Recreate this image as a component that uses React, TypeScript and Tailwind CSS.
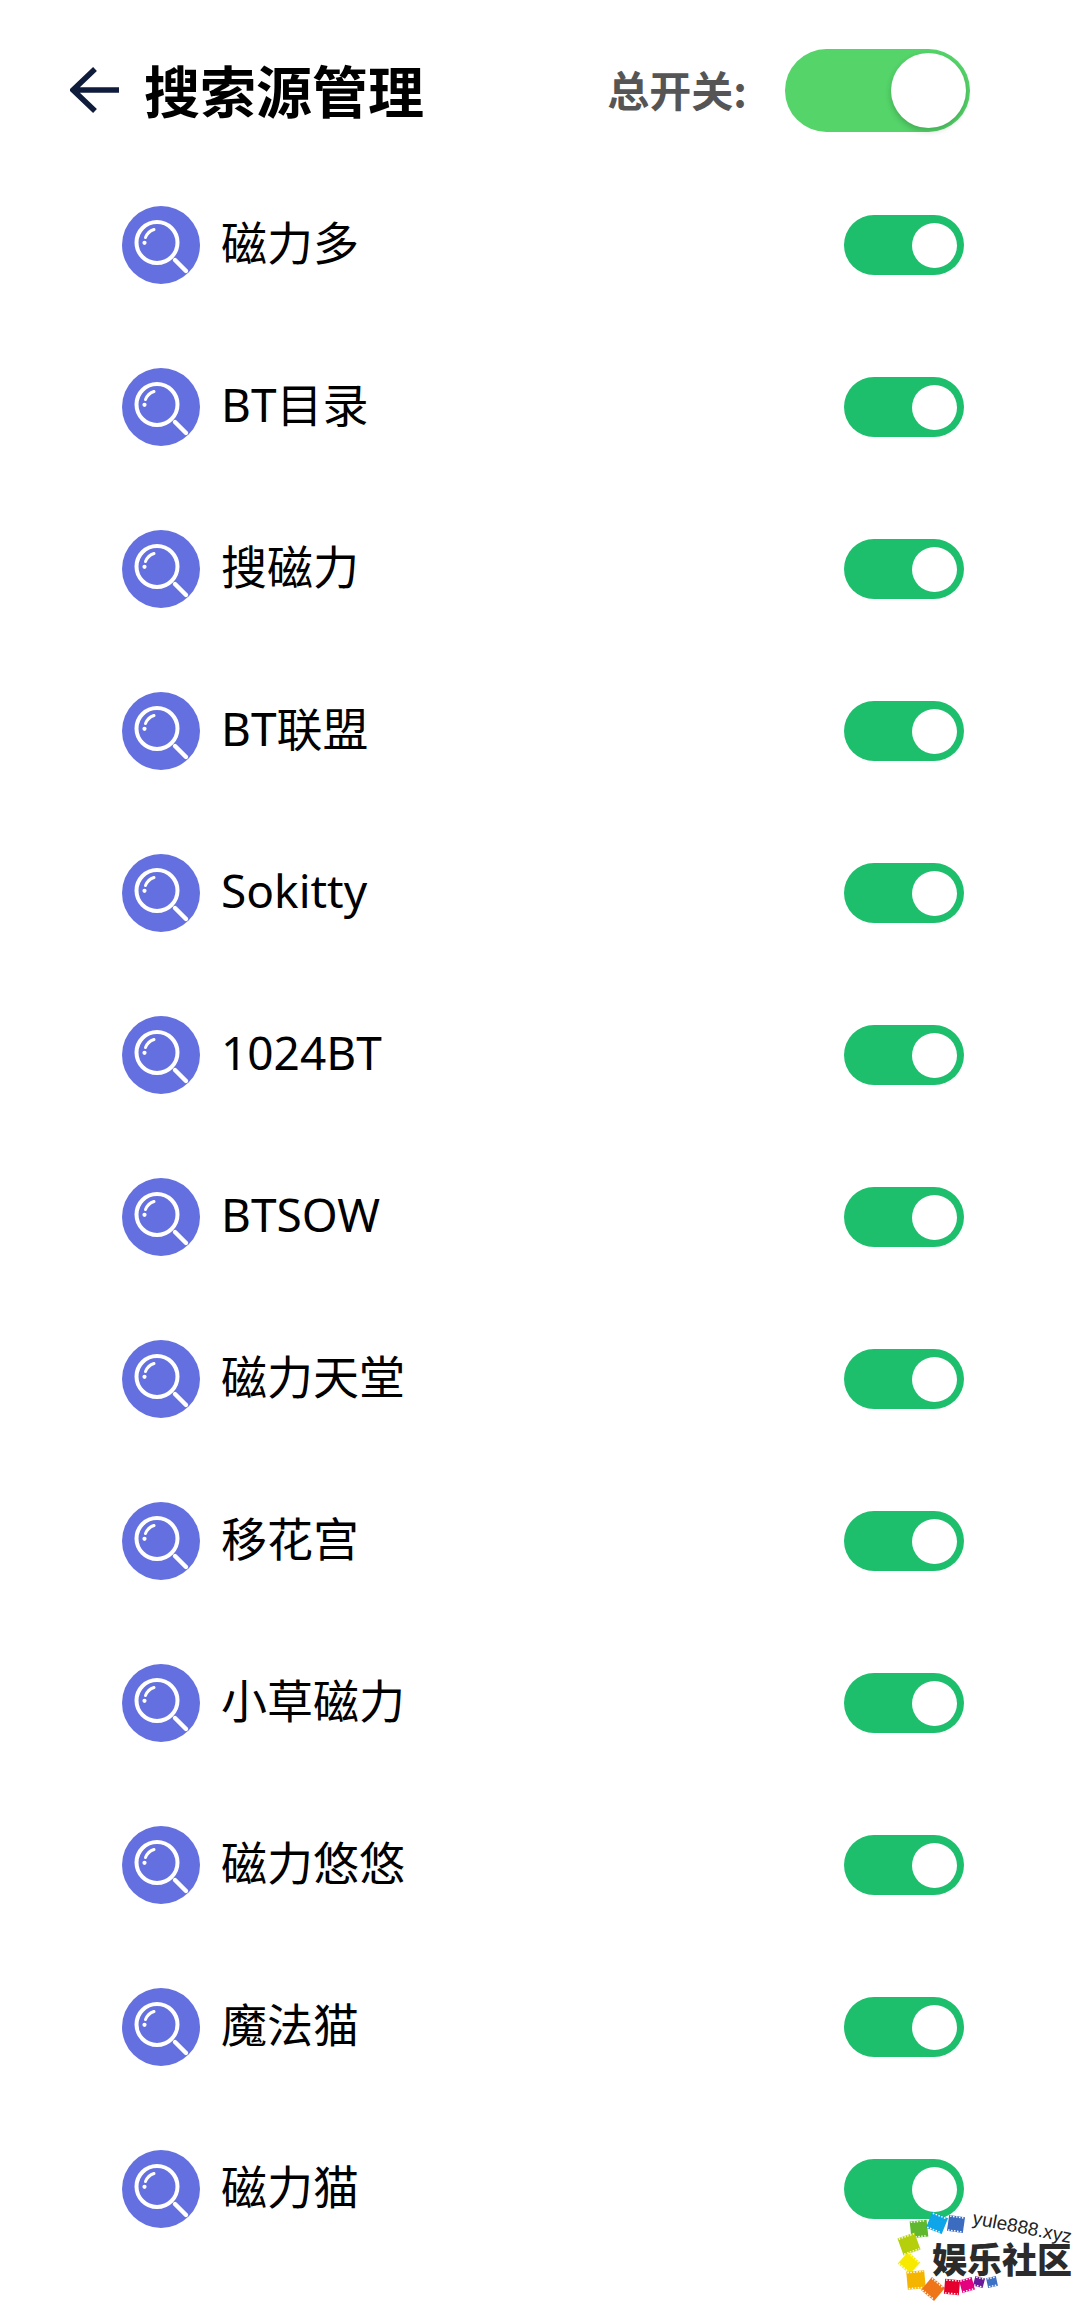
const rows = ["磁力多","BT目录","搜磁力","BT联盟","Sokitty","1024BT","BTSOW","磁力天堂","移花宫","小草磁力","磁力悠悠","魔法猫","磁力猫"];

function SearchIcon() {
  return (
    <svg viewBox="0 0 78 78" className="w-[78px] h-[78px] shrink-0">
      <circle cx="39" cy="39" r="39" fill="#6570e0" />
      <circle cx="35" cy="36.5" r="20.5" fill="none" stroke="#fff" strokeWidth="4" />
      <path d="M53 54L64 65" stroke="#fff" strokeWidth="4.4" strokeLinecap="round" />
      <path d="M23.5 31.5A13.5 13.5 0 0 1 32 23.5" fill="none" stroke="#fff" strokeWidth="3" strokeLinecap="round" />
      <circle cx="22.5" cy="36.8" r="2.1" fill="#fff" />
    </svg>
  );
}

function Toggle() {
  return (
    <div className="w-[120px] h-[60px] rounded-full bg-[#1dbf6d] flex items-center justify-end pr-[7px]">
      <div className="w-[45px] h-[45px] rounded-full bg-white" />
    </div>
  );
}

const films: [number, number, number, number, string][] = [
  [59, 99, 17, -6, "#5fb82e"],
  [77, 93, 17, 22, "#0ea5e9"],
  [96, 94, 16, 8, "#3b6cc0"],
  [49, 114, 18, -20, "#b5cf0c"],
  [49, 133, 16, 42, "#f7ea00"],
  [56, 150, 18, -5, "#f5b400"],
  [73, 159, 17, 40, "#ee7518"],
  [92, 157, 15, 5, "#e6002d"],
  [107, 155, 13, -15, "#e4007f"],
  [119, 152, 10, 15, "#6a1b9a"],
  [132, 152, 10, -12, "#3d72c4"],
];

function Watermark() {
  return (
    <div className="absolute left-[860px] top-[2130px] w-[220px] h-[180px]">
      <svg viewBox="0 0 220 180" className="absolute inset-0 w-full h-full">
        {films.map(([x, y, s, r, c], i) => (
          <g key={i} transform={`rotate(${r} ${x} ${y})`}>
            <rect x={x - s / 2} y={y - s / 2} width={s} height={s} fill={c} />
            <path
              d={`M${x - s / 2 + 1} ${y - s / 2 + 1}H${x + s / 2 - 1}M${x - s / 2 + 1} ${y + s / 2 - 1}H${x + s / 2 - 1}`}
              stroke="#fff"
              strokeWidth="1.4"
              strokeDasharray="1.5 1.5"
            />
          </g>
        ))}
      </svg>
      <span className="absolute left-[113px] top-[78px] text-[19px] leading-[20px] text-[#222] rotate-[11deg] origin-left [font-family:'Liberation_Sans',sans-serif] whitespace-nowrap">yule888.xyz</span>
      <span className="absolute left-[72px] top-[108px] text-[35px] leading-[40px] font-black text-[#2b2b2b] [font-family:'Noto_Sans_CJK_SC',sans-serif] whitespace-nowrap">娱乐社区</span>
    </div>
  );
}

export default function App() {
  return (
    <div className="relative w-[1080px] h-[2310px] bg-white overflow-hidden [font-family:'Noto_Sans','Noto_Sans_CJK_SC',sans-serif]">
      <header className="h-[164px] pt-[16px] flex items-center pl-[70px] pr-[110px]">
        <svg viewBox="0 0 49 46" className="w-[49px] h-[46px] shrink-0">
          <path d="M25 2L3 23L25 44M3 23H49" fill="none" stroke="#101c3c" strokeWidth="5.5" />
        </svg>
        <h1 className="ml-[25px] pb-[2px] text-[56px] leading-none font-bold text-black [font-family:'Noto_Sans_CJK_SC',sans-serif]">搜索源管理</h1>
        <span className="ml-auto pb-[2px] text-[42px] leading-none font-bold text-[#555] [font-family:'Noto_Sans_CJK_SC',sans-serif]">总开关:</span>
        <div className="ml-[38px] w-[185px] h-[83px] rounded-full bg-[#54d469] flex items-center justify-end pr-[4px]">
          <div className="w-[75px] h-[75px] rounded-full bg-white shadow-[0_3px_6px_rgba(0,0,0,0.2)]" />
        </div>
      </header>
      <ul>
        {rows.map((name) => (
          <li key={name} className="h-[162px] flex items-center pl-[122px] pr-[116px]">
            <SearchIcon />
            <span className="ml-[21px] pb-[6px] text-[46px] leading-none text-black">{name}</span>
            <div className="ml-auto"><Toggle /></div>
          </li>
        ))}
      </ul>
      <Watermark />
    </div>
  );
}
